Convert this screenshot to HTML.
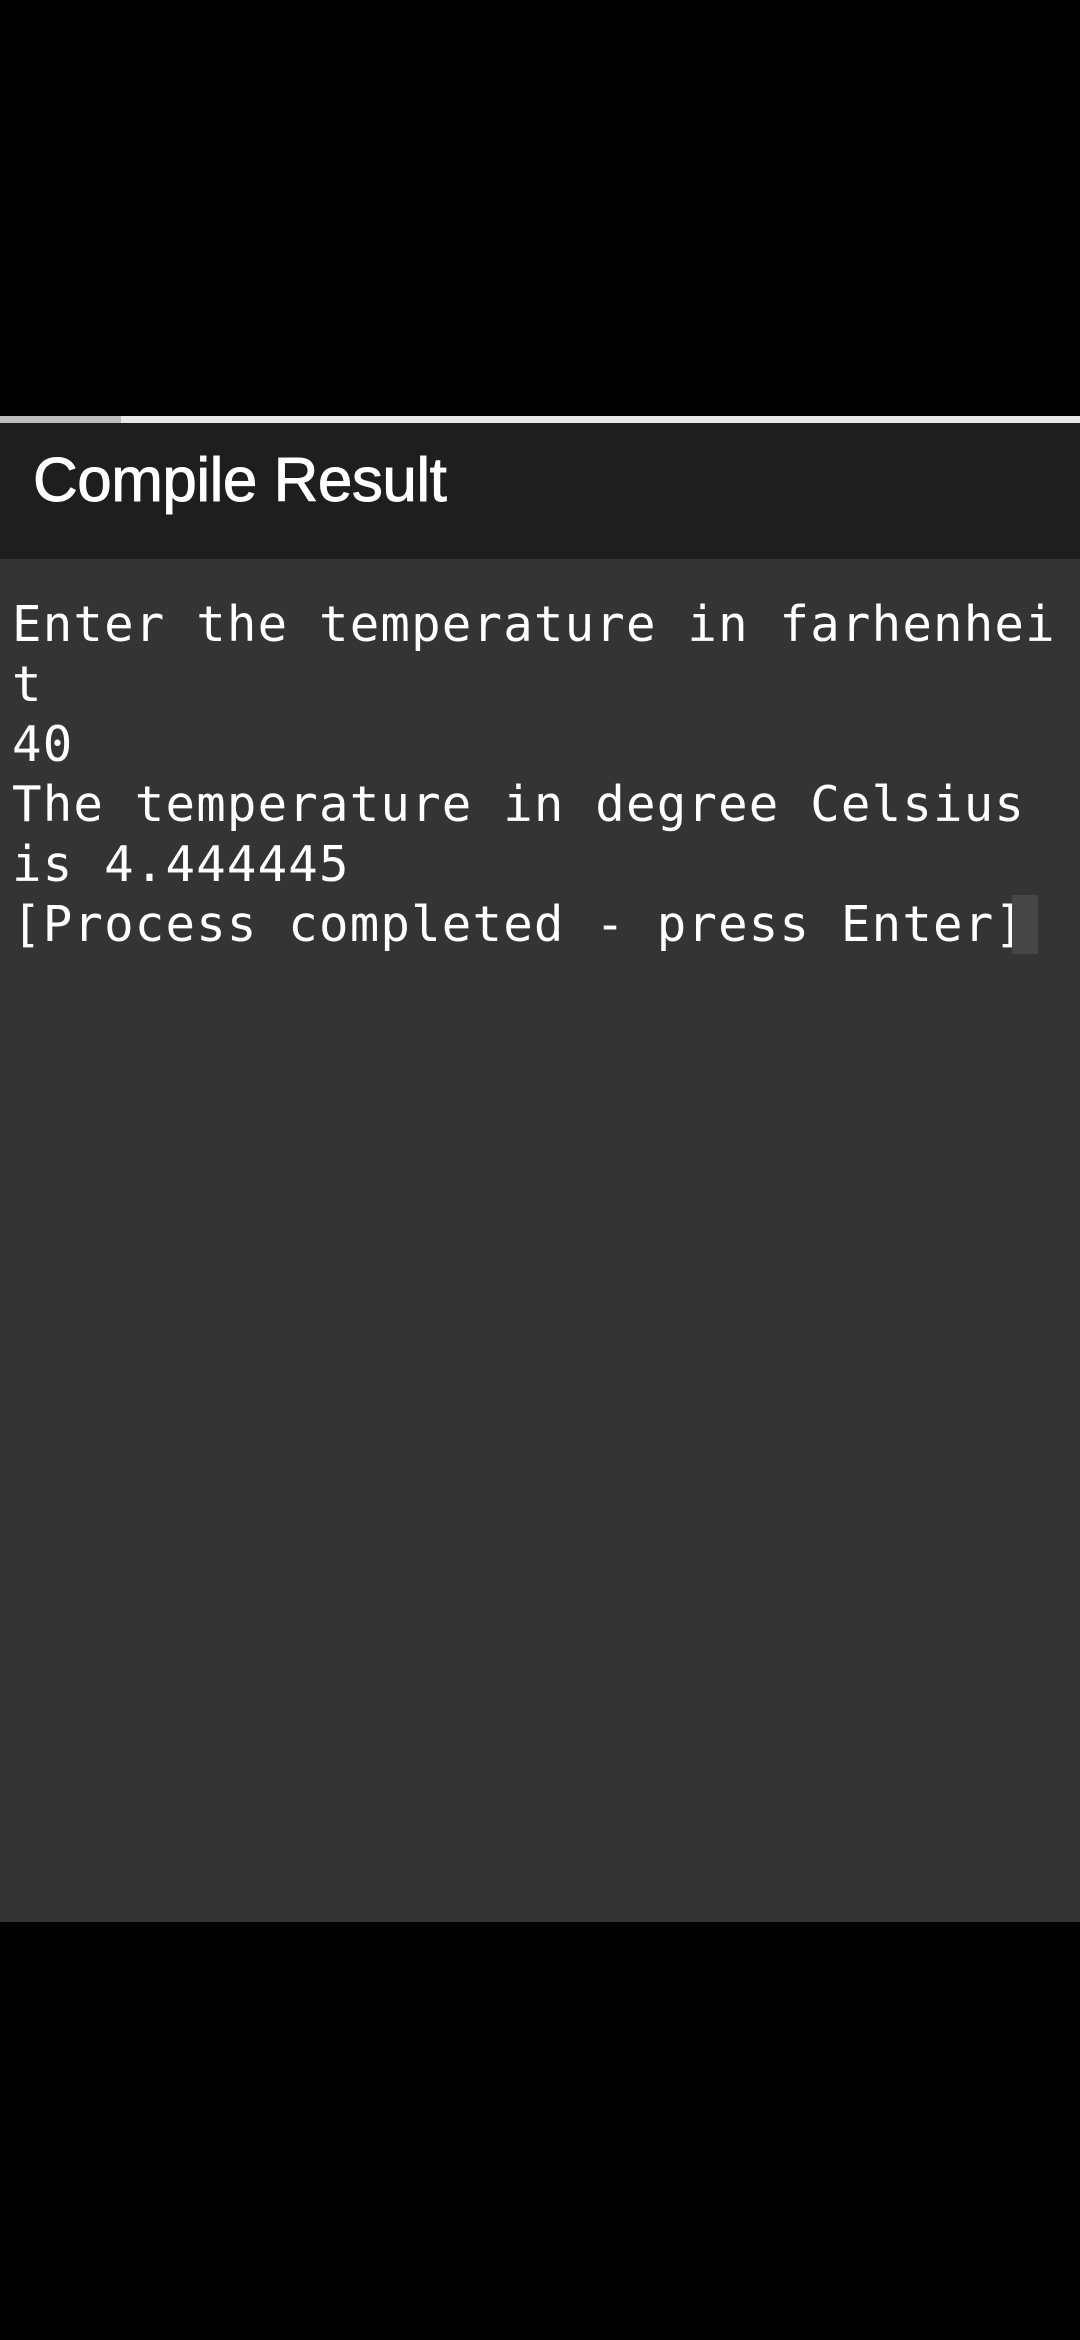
<!DOCTYPE html>
<html><head><meta charset="utf-8"><style>
html,body{margin:0;padding:0;}
body{width:1080px;height:2340px;background:#000;position:relative;overflow:hidden;}
.line1{position:absolute;top:416px;left:0;width:121px;height:7px;background:#bdbdbd;}
.line2{position:absolute;top:416px;left:121px;width:959px;height:7px;background:#e8e8e8;}
.hdr{position:absolute;top:423px;left:0;width:1080px;height:136px;background:#1e1e1e;}
.title{position:absolute;left:33px;font-family:"Liberation Sans",Arial,sans-serif;font-size:62px;color:#fff;line-height:1;letter-spacing:-0.5px;-webkit-text-stroke:0.9px #fff;}
.body{position:absolute;top:559px;left:0;width:1080px;height:1363px;background:#333433;}
pre{position:absolute;left:12px;top:595px;margin:0;font-family:"DejaVu Sans Mono","Liberation Mono",monospace;font-size:49px;line-height:60px;color:#fff;letter-spacing:1.2px;}
.cur{position:absolute;left:1012px;top:895px;width:26px;height:59px;background:#464646;}
</style></head><body>
<div class="line1"></div><div class="line2"></div>
<div class="hdr"><div class="title" style="top:27px">Compile Result</div></div>
<div class="body"></div>
<pre>Enter the temperature in farhenhei
t
40
The temperature in degree Celsius
is 4.444445
[Process completed - press Enter]</pre>
<div class="cur"></div>
</body></html>
